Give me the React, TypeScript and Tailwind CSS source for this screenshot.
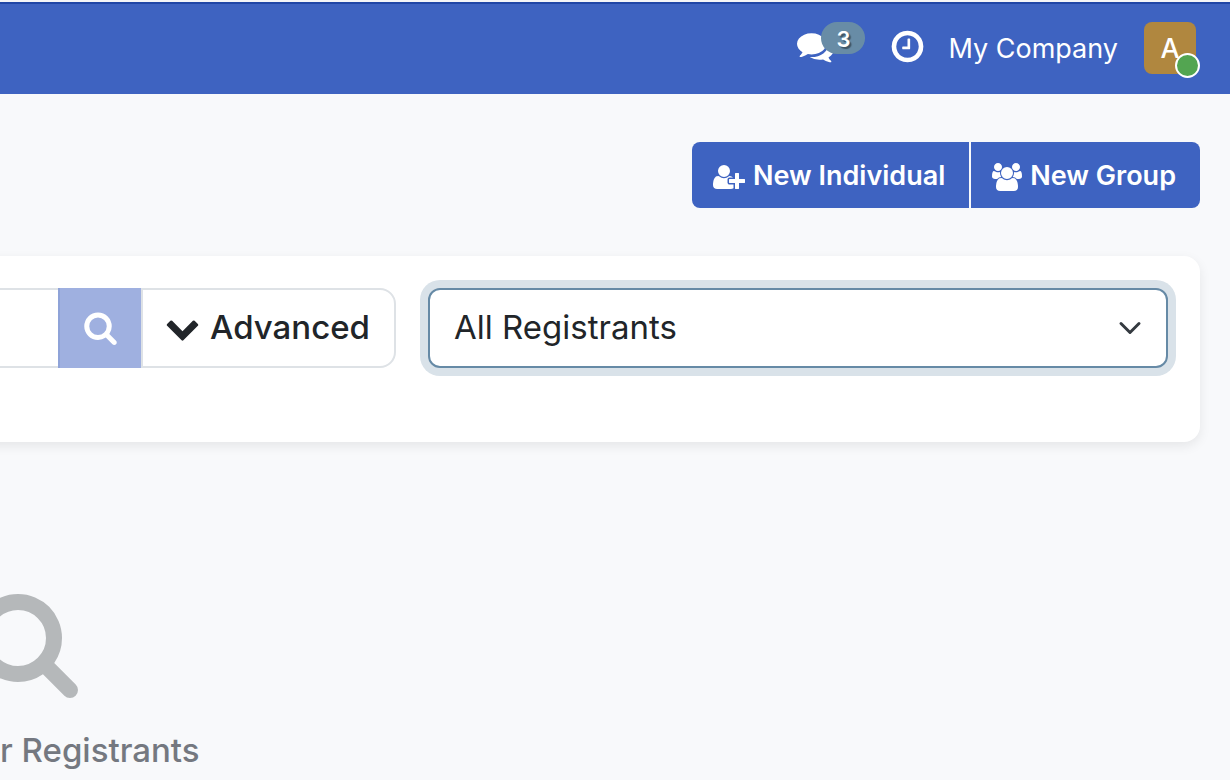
import { useState } from "react";
import type { ReactNode } from "react";

type GlyphProps = { viewBox?: string; className: string; children: ReactNode };

const Glyph = ({ viewBox = "0 0 1792 1792", className, children }: GlyphProps) => (
  <svg viewBox={viewBox} className={`shrink-0 ${className}`} fill="currentColor" aria-hidden="true">
    {children}
  </svg>
);

const searchPath =
  "M1216 832q0-185-131.5-316.5t-316.5-131.5-316.5 131.5-131.5 316.5 131.5 316.5 316.5 131.5 316.5-131.5 131.5-316.5zm512 832q0 52-38 90t-90 38q-54 0-90-38l-343-342q-179 124-399 124-143 0-273.5-55.5t-225-150-150-225-55.5-273.5 55.5-273.5 150-225 225-150 273.5-55.5 273.5 55.5 225 150 150 225 55.5 273.5q0 220-124 399l343 343q37 37 37 90z";

const Header = () => (
  <header className="flex h-[94px] items-center justify-end border-t-2 border-[#f4f5f7] bg-[#3e63c1] pr-[34px] text-white shadow-[inset_0_2px_0_#2046a6]">
    <button type="button" aria-label="Messages" className="relative mr-[55px] mb-[3px]">
      <Glyph className="size-[37px]">
        <path d="M1408 768q0 139-94 257t-256.5 186.5-353.5 68.5q-86 0-176-16-124 88-278 128-36 9-86 16h-3q-11 0-20.5-8t-11.5-21q-1-3-1-6.5t.5-6.5 2-6l2.5-5 3.5-5.5 4-5 4.5-5 4-4.5q5-6 23-25t26-29.5 22.5-29 25-38.5 20.5-44q-124-72-195-177t-71-224q0-139 94-257t256.5-186.5 353.5-68.5 353.5 68.5 256.5 186.5 94 257zm384 256q0 120-71 224.5t-195 176.5q10 24 20.5 44t25 38.5 22.5 29 26 29.5 23 25q1 1 4 4.5t4.5 5 4 5 3.5 5.5l2.5 5 2 6 .5 6.5-1 6.5q-3 14-13 22t-22 7q-50-7-86-16-154-40-278-128-90 16-176 16-271 0-472-132 58 4 88 4 161 0 309-45t264-129q125-92 192-212t67-254q0-77-23-152 129 71 204 178t75 230z" />
      </Glyph>
      <span className="absolute -top-1.5 left-6 flex h-8 w-11 items-center justify-center rounded-full bg-[#688ca6] pt-0.5 text-[22px] font-semibold [text-shadow:2px_2px_1px_rgba(0,0,0,0.4)]">
        3
      </span>
    </button>
    <button type="button" aria-label="Activities" className="mr-[22px] mb-[3px]">
      <Glyph className="size-[37px]">
        <path d="M1024 544v448q0 14-9 23t-23 9h-320q-14 0-23-9t-9-23v-64q0-14 9-23t23-9h224v-352q0-14 9-23t23-9h64q14 0 23 9t9 23zm416 352q0-148-73-273t-198-198-273-73-273 73-198 198-73 273 73 273 198 198 273 73 273-73 198-198 73-273zm224 0q0 209-103 385.5t-279.5 279.5-385.5 103-385.5-103-279.5-279.5-103-385.5 103-385.5 279.5-279.5 385.5-103 385.5 103 279.5 279.5 103 385.5z" />
      </Glyph>
    </button>
    <button type="button" className="mr-[26px] pt-0.5 text-[27px]">
      My Company
    </button>
    <button
      type="button"
      aria-label="User menu"
      className="relative flex size-[52px] items-center justify-center rounded-lg bg-[#b0873f] pt-0.5 text-[27px] font-medium"
    >
      A
      <span className="absolute -right-1 -bottom-1 size-[25px] rounded-full border-2 border-white bg-[#53a551]" />
    </button>
  </header>
);

const Actions = () => (
  <div className="mt-12 mr-[30px] flex h-[66px] justify-end gap-0.5 text-[27px] font-semibold text-white">
    <button type="button" className="flex items-center gap-2 rounded-l-lg bg-[#3e63c1] pt-[3px] pr-6 pl-[21px]">
      <Glyph viewBox="0 0 2048 1792" className="h-7 w-8">
        <path d="M704 896q-159 0-271.5-112.5T320 512t112.5-271.5T704 128t271.5 112.5T1088 512 975.5 783.5 704 896zm960 128h352q13 0 22.5 9.5t9.5 22.5v192q0 13-9.5 22.5t-22.5 9.5h-352v352q0 13-9.5 22.5t-22.5 9.5h-192q-13 0-22.5-9.5t-9.5-22.5v-352h-352q-13 0-22.5-9.5t-9.5-22.5v-192q0-13 9.5-22.5t22.5-9.5h352V672q0-13 9.5-22.5t22.5-9.5h192q13 0 22.5 9.5t9.5 22.5v352zm-736 224q0 52 38 90t90 38h256v238q-68 50-171 50H267q-121 0-194-69T0 1405q0-53 3.5-103.5t14-109T44 1084t43-97.5 62-81 85.5-53.5T346 832q19 0 39 17 79 61 154.5 91.5T704 971t164.5-30.5T1023 849q20-17 39-17 132 0 217 96h-223q-52 0-90 38t-38 90v192z" />
      </Glyph>
      New Individual
    </button>
    <button type="button" className="flex items-center gap-2 rounded-r-lg bg-[#3e63c1] pt-[3px] pr-6 pl-[21px]">
      <Glyph viewBox="0 0 1920 1792" className="h-7 w-[30px]">
        <path d="M593 896q-162 5-265 128h-134q-82 0-138-40.5t-56-118.5q0-353 124-353 6 0 43.5 21t97.5 42.5 119 21.5q67 0 133-23-5 37-5 66 0 139 81 256zm1071 637q0 120-73 189.5t-194 69.5h-874q-121 0-194-69.5t-73-189.5q0-53 3.5-103.5t14-109 26.5-108.5 43-97.5 62-81 85.5-53.5 111.5-20q10 0 43 21.5t73 48 107 48 135 21.5 135-21.5 107-48 73-48 43-21.5q61 0 111.5 20t85.5 53.5 62 81 43 97.5 26.5 108.5 14 109 3.5 103.5zm-1024-1277q0 106-75 181t-181 75-181-75-75-181 75-181 181-75 181 75 75 181zm704 384q0 159-112.5 271.5t-271.5 112.5-271.5-112.5-112.5-271.5 112.5-271.5 271.5-112.5 271.5 112.5 112.5 271.5zm576 225q0 78-56 118.5t-138 40.5h-134q-103-123-265-128 81-117 81-256 0-29-5-66 66 23 133 23 59 0 119-21.5t97.5-42.5 43.5-21q124 0 124 353zm-128-609q0 106-75 181t-181 75-181-75-75-181 75-181 181-75 181 75 75 181z" />
      </Glyph>
      New Group
    </button>
  </div>
);

const SearchCard = () => {
  const [query, setQuery] = useState("");

  return (
    <form className="mt-12 mr-[30px] -ml-4 flex gap-8 rounded-r-2xl bg-white pt-8 pr-8 pb-[74px] pl-4 text-[#212529] shadow-[0_4px_12px_rgba(0,0,0,0.08)]">
      <div className="flex h-20 w-[396px] shrink-0">
        <input
          type="text"
          aria-label="Search registrants"
          value={query}
          onChange={(e) => setQuery(e.target.value)}
          className="w-0 flex-1 border-y-2 border-[#dee2e6] px-2 text-[33px] outline-none"
        />
        <button
          type="button"
          aria-label="Search"
          className="flex w-[83px] items-center justify-center border-l-2 border-[#8fa3d8] bg-[#9fb0e0] pb-0.5 text-white"
        >
          <Glyph className="size-[35px]">
            <path d={searchPath} />
          </Glyph>
        </button>
        <button
          type="button"
          className="flex w-[255px] items-center justify-center gap-2.5 rounded-r-2xl border-2 border-[#dee2e6] pr-0.5 text-[33px] font-medium"
        >
          <Glyph className="mb-0.5 size-[35px]">
            <path d="M1683 808l-742 741q-19 19-45 19t-45-19l-742-741q-19-19-19-45.5t19-45.5l166-165q19-19 45-19t45 19l531 531 531-531q19-19 45-19t45 19l166 165q19 19 19 45.5t-19 45.5z" />
          </Glyph>
          Advanced
        </button>
      </div>
      <div className="relative flex-1">
        <select
          aria-label="Registrant type"
          className="h-20 w-full appearance-none rounded-xl border-2 border-[#668aa6] bg-white pr-16 pl-6 text-[33px] ring-8 ring-[#d9e2e9] outline-none"
        >
          <option>All Registrants</option>
        </select>
        <svg
          viewBox="0 0 16 16"
          className="pointer-events-none absolute top-7 right-[26px] size-6"
          fill="none"
          stroke="#343a40"
          strokeWidth="2"
          strokeLinecap="round"
          strokeLinejoin="round"
          aria-hidden="true"
        >
          <path d="m2 5 6 6 6-6" />
        </svg>
      </div>
    </form>
  );
};

const EmptyState = () => (
  <section className="mt-36">
    <Glyph viewBox="480 0 1312 1792" className="h-28 w-[82px] text-[#b5b8ba]">
      <path d={searchPath} />
    </Glyph>
    <h2 className="mt-7 text-[33px] leading-12 font-medium text-[#747880]">r Registrants</h2>
  </section>
);

const App = () => (
  <div className="min-h-screen overflow-hidden bg-[#f8f9fb] font-[Inter,'Liberation_Sans',sans-serif]">
    <Header />
    <main>
      <Actions />
      <SearchCard />
      <EmptyState />
    </main>
  </div>
);

export default App;
